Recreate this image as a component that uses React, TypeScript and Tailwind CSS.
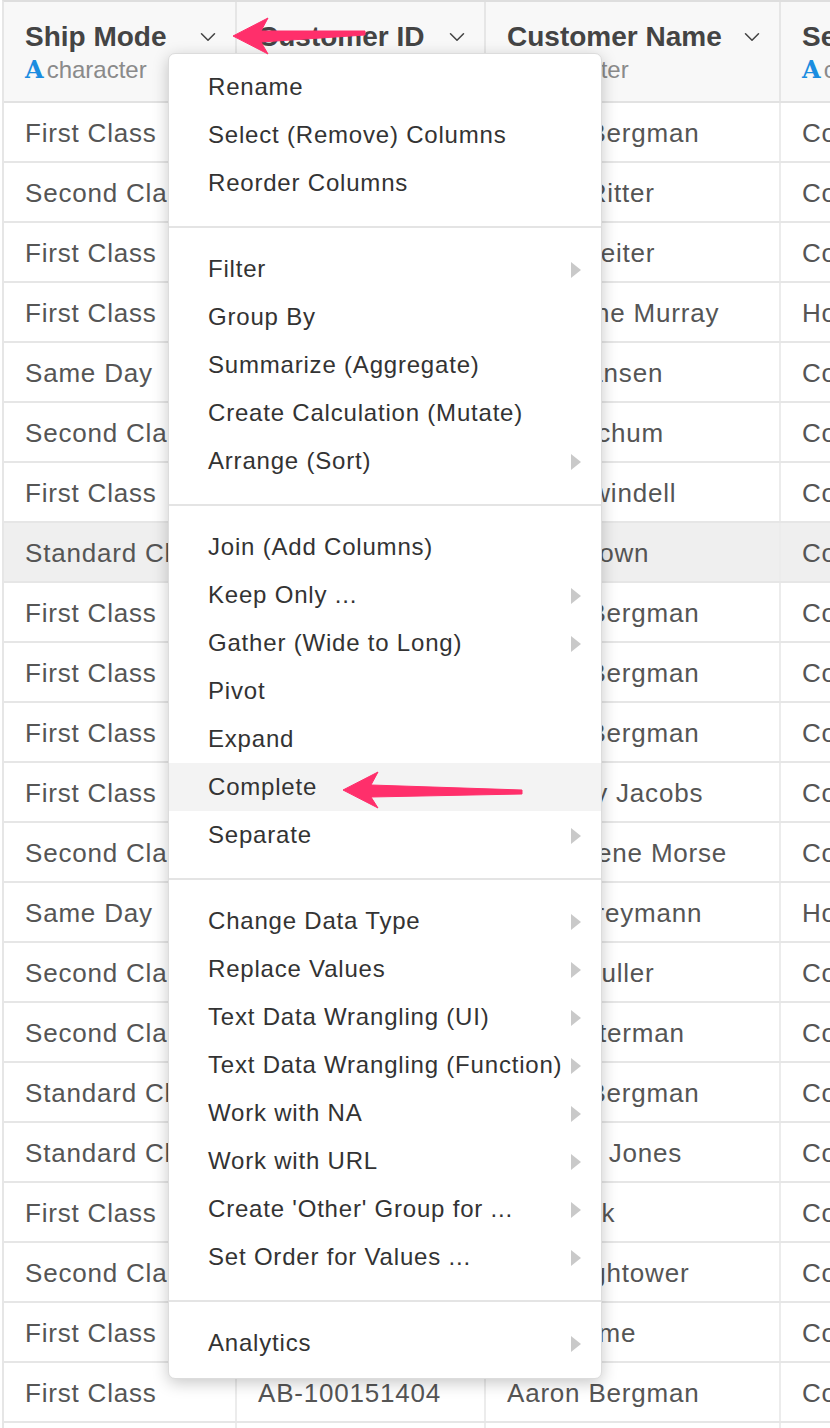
import { ChevronDown } from "lucide-react";

type Row = { mode: string; id: string; name: string; seg: string };

const rows: Row[] = [
  { mode: "First Class", id: "AB-100151402", name: "Aaron Bergman", seg: "Consumer" },
  { mode: "Second Class", id: "JR-162101402", name: "Justin Ritter", seg: "Consumer" },
  { mode: "First Class", id: "CR-127301408", name: "Craig Reiter", seg: "Consumer" },
  { mode: "First Class", id: "KM-164051404", name: "Katherine Murray", seg: "Home Office" },
  { mode: "Same Day", id: "RH-194951404", name: "Rick Hansen", seg: "Consumer" },
  { mode: "Second Class", id: "AM-105801402", name: "Ally Mitchum", seg: "Consumer" },
  { mode: "First Class", id: "JS-160501408", name: "Joey Swindell", seg: "Consumer" },
  { mode: "Standard Class", id: "JB-202901402", name: "Jack Brown", seg: "Consumer" },
  { mode: "First Class", id: "AB-100151402", name: "Aaron Bergman", seg: "Consumer" },
  { mode: "First Class", id: "AB-100151406", name: "Aaron Bergman", seg: "Consumer" },
  { mode: "First Class", id: "AB-100151408", name: "Aaron Bergman", seg: "Consumer" },
  { mode: "First Class", id: "AJ-107801406", name: "Anthony Jacobs", seg: "Consumer" },
  { mode: "Second Class", id: "MM-176051408", name: "Magdalene Morse", seg: "Consumer" },
  { mode: "Same Day", id: "HF-147151404", name: "Hans Freymann", seg: "Home Office" },
  { mode: "Second Class", id: "SM-203201402", name: "Sean Muller", seg: "Consumer" },
  { mode: "Second Class", id: "TW-211251406", name: "Ted Waterman", seg: "Consumer" },
  { mode: "Standard Class", id: "AB-100151404", name: "Aaron Bergman", seg: "Consumer" },
  { mode: "Standard Class", id: "BJ-117101406", name: "Bradley Jones", seg: "Consumer" },
  { mode: "First Class", id: "LP-168801408", name: "Lila Park", seg: "Consumer" },
  { mode: "Second Class", id: "DH-132751402", name: "Dan Hightower", seg: "Consumer" },
  { mode: "First Class", id: "SH-199751406", name: "Sue Hume", seg: "Consumer" },
  { mode: "First Class", id: "AB-100151404", name: "Aaron Bergman", seg: "Consumer" },
  { mode: "Same Day", id: "BT-113051406", name: "Beth Thompson", seg: "Consumer" },
];

const groups: { label: string; sub?: boolean; active?: boolean }[][] = [
  [{ label: "Rename" }, { label: "Select (Remove) Columns" }, { label: "Reorder Columns" }],
  [
    { label: "Filter", sub: true },
    { label: "Group By" },
    { label: "Summarize (Aggregate)" },
    { label: "Create Calculation (Mutate)" },
    { label: "Arrange (Sort)", sub: true },
  ],
  [
    { label: "Join (Add Columns)" },
    { label: "Keep Only ...", sub: true },
    { label: "Gather (Wide to Long)", sub: true },
    { label: "Pivot" },
    { label: "Expand" },
    { label: "Complete", active: true },
    { label: "Separate", sub: true },
  ],
  [
    { label: "Change Data Type", sub: true },
    { label: "Replace Values", sub: true },
    { label: "Text Data Wrangling (UI)", sub: true },
    { label: "Text Data Wrangling (Function)", sub: true },
    { label: "Work with NA", sub: true },
    { label: "Work with URL", sub: true },
    { label: "Create 'Other' Group for ...", sub: true },
    { label: "Set Order for Values ...", sub: true },
  ],
  [{ label: "Analytics", sub: true }],
];

function HeaderCell({ title, w, chevron = true }: { title: string; w: string; chevron?: boolean }) {
  return (
    <div className={`${w} shrink-0 border-r-2 border-[#e6e6e6] pl-[21px] pr-[14px] pt-[17px] overflow-hidden`}>
      <div className="flex items-center justify-between">
        <span className="text-[28px] font-bold text-[#444] whitespace-nowrap leading-[36px]">{title}</span>
        {chevron ? <ChevronDown className="w-[26px] h-[26px] text-[#444] shrink-0" strokeWidth={1.4} /> : null}
      </div>
      <div className="flex items-center gap-[3px] whitespace-nowrap">
        <span className="font-['DejaVu_Serif'] font-bold text-[24px] text-[#1b8de0] leading-[30px]">A</span>
        <span className="text-[24px] text-[#8a8a8a] leading-[30px]">character</span>
      </div>
    </div>
  );
}

const cell = "shrink-0 pl-[21px] pt-[2px] flex items-center overflow-hidden whitespace-nowrap";

export default function App() {
  return (
    <div className="relative w-[830px] h-[1428px] overflow-hidden bg-white font-['Liberation_Sans',Arial,sans-serif]">
      <div className="border-t-2 border-[#dedede] ml-[2px] border-l-2 border-l-[#e6e6e6]">
        <div className="flex h-[101px] bg-[#f8f8f8] border-b-2 border-[#e2e2e2]">
          <HeaderCell title="Ship Mode" w="w-[233px]" />
          <HeaderCell title="Customer ID" w="w-[249px]" />
          <HeaderCell title="Customer Name" w="w-[295px]" />
          <HeaderCell title="Segment" w="w-[200px]" chevron={false} />
        </div>
        {rows.map((r, i) => (
          <div
            key={i}
            className={`flex h-[60px] border-b-2 border-[#e6e6e6] text-[26px] tracking-[0.8px] text-[#555] ${i === 7 ? "bg-[#efefef]" : ""}`}
          >
            <div className={`w-[233px] border-r-2 border-[#ececec] ${cell}`}>{r.mode}</div>
            <div className={`w-[249px] border-r-2 border-[#ececec] ${cell}`}>{r.id}</div>
            <div className={`w-[295px] border-r-2 border-[#ececec] ${cell}`}>{r.name}</div>
            <div className={`w-[200px] ${cell}`}>{r.seg}</div>
          </div>
        ))}
      </div>

      {/* column menu */}
      <div className="absolute left-[168px] top-[53px] w-[434px] rounded-[7px] bg-white border border-[#dcdcdc] shadow-[0_4px_16px_rgba(0,0,0,0.22)] pt-[9px] pb-[11px]">
        {groups.map((g, gi) => (
          <div key={gi}>
            {gi > 0 ? <div className="mt-[19px] mb-[17px] h-[2px] bg-[#e4e4e4]" /> : null}
            {g.map((it) => (
              <div
                key={it.label}
                className={`relative flex h-[48px] items-center pl-[39px] text-[24px] tracking-[0.8px] text-[#333] whitespace-nowrap ${it.active ? "bg-[#f3f3f3]" : ""}`}
              >
                {it.label}
                {it.sub ? (
                  <span className="absolute right-[20px] top-[17px] w-0 h-0 border-y-[8px] border-y-transparent border-l-[10px] border-l-[#c9c9c9]" />
                ) : null}
              </div>
            ))}
          </div>
        ))}
      </div>

      {/* callout arrows */}
      <svg className="absolute inset-0 pointer-events-none" width="830" height="1428">
        <path
          d="M233 36 L268 18 L261 31 L365 31 L365 35 L261 42 L268 54 Z"
          fill="#ff2f6b"
          stroke="#ff2f6b"
          strokeWidth="1"
          strokeLinejoin="round"
        />
        <path
          d="M343 790 L378 772 L371 785 L522 790 L522 794 L371 797 L378 808 Z"
          fill="#ff2f6b"
          stroke="#ff2f6b"
          strokeWidth="1"
          strokeLinejoin="round"
        />
      </svg>
    </div>
  );
}
